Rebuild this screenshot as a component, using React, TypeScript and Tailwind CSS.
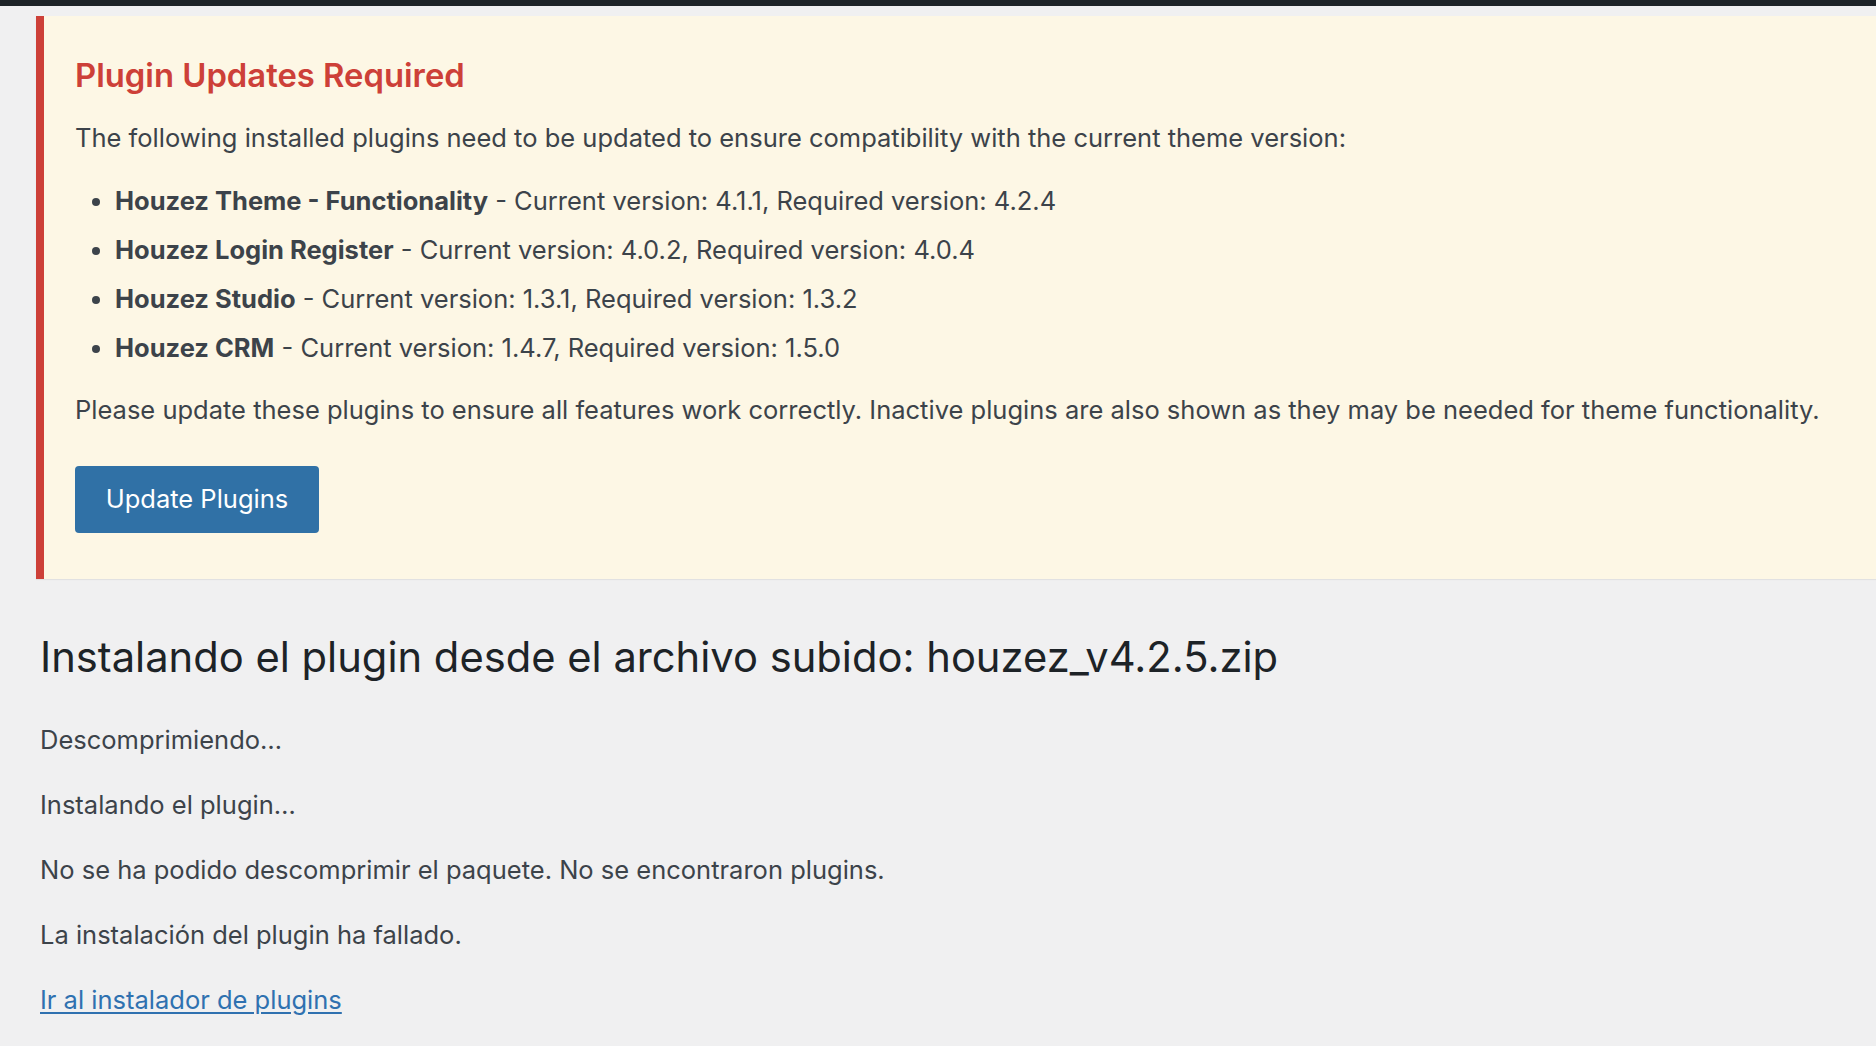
const plugins = [
  { name: 'Houzez Theme - Functionality', current: '4.1.1', required: '4.2.4' },
  { name: 'Houzez Login Register', current: '4.0.2', required: '4.0.4' },
  { name: 'Houzez Studio', current: '1.3.1', required: '1.3.2' },
  { name: 'Houzez CRM', current: '1.4.7', required: '1.5.0' },
];

const steps = [
  'Descomprimiendo…',
  'Instalando el plugin…',
  'No se ha podido descomprimir el paquete. No se encontraron plugins.',
  'La instalación del plugin ha fallado.',
];

export default function App() {
  return (
    <div className="min-h-screen bg-[#f0f0f1] font-['Inter',sans-serif] text-[#3c434a]">
      <div className="h-[6px] bg-[#1d2327]" />
      <div className="pl-[36px] pt-[10px]">
        {/* plugin update notice */}
        <div className="border-l-[8px] border-[#cd4038] bg-[#fdf7e5] pl-[31px] pt-[39px] pb-[46px] shadow-[0_1px_1px_rgba(0,0,0,0.06)]">
          <h2 className="text-[32.8px] leading-[40px] font-semibold text-[#cd4038]">Plugin Updates Required</h2>
          <p className="mt-[27px] text-[25.5px] leading-[32px]">
            The following installed plugins need to be updated to ensure compatibility with the current theme version:
          </p>
          <ul className="mt-[31px] flex flex-col gap-[17px] pl-[40px] list-disc text-[25.5px] leading-[32px]">
            {plugins.map((p) => (
              <li key={p.name}>
                <strong className="font-bold">{p.name}</strong> - Current version: {p.current}, Required version: {p.required}
              </li>
            ))}
          </ul>
          <p className="mt-[30px] text-[25.5px] leading-[32px]">
            Please update these plugins to ensure all features work correctly. Inactive plugins are also shown as they may be needed for theme functionality.
          </p>
          <button className="mt-[40px] h-[67px] w-[244px] rounded-[4px] bg-[#3071a6] text-[25.5px] text-white">
            Update Plugins
          </button>
        </div>

        {/* upload result */}
        <div className="pl-[4px]">
          <h1 className="mt-[53px] text-[41.7px] leading-[50px] font-normal text-[#1d2327]">
            Instalando el plugin desde el archivo subido: houzez_v4.2.5.zip
          </h1>
          <div className="mt-[42px] flex flex-col gap-[33px] text-[25.5px] leading-[32px]">
            {steps.map((s) => (
              <p key={s}>{s}</p>
            ))}
            <p>
              <a href="#" className="text-[#2f71b0] underline underline-offset-[3px]">Ir al instalador de plugins</a>
            </p>
          </div>
        </div>
      </div>
    </div>
  );
}
